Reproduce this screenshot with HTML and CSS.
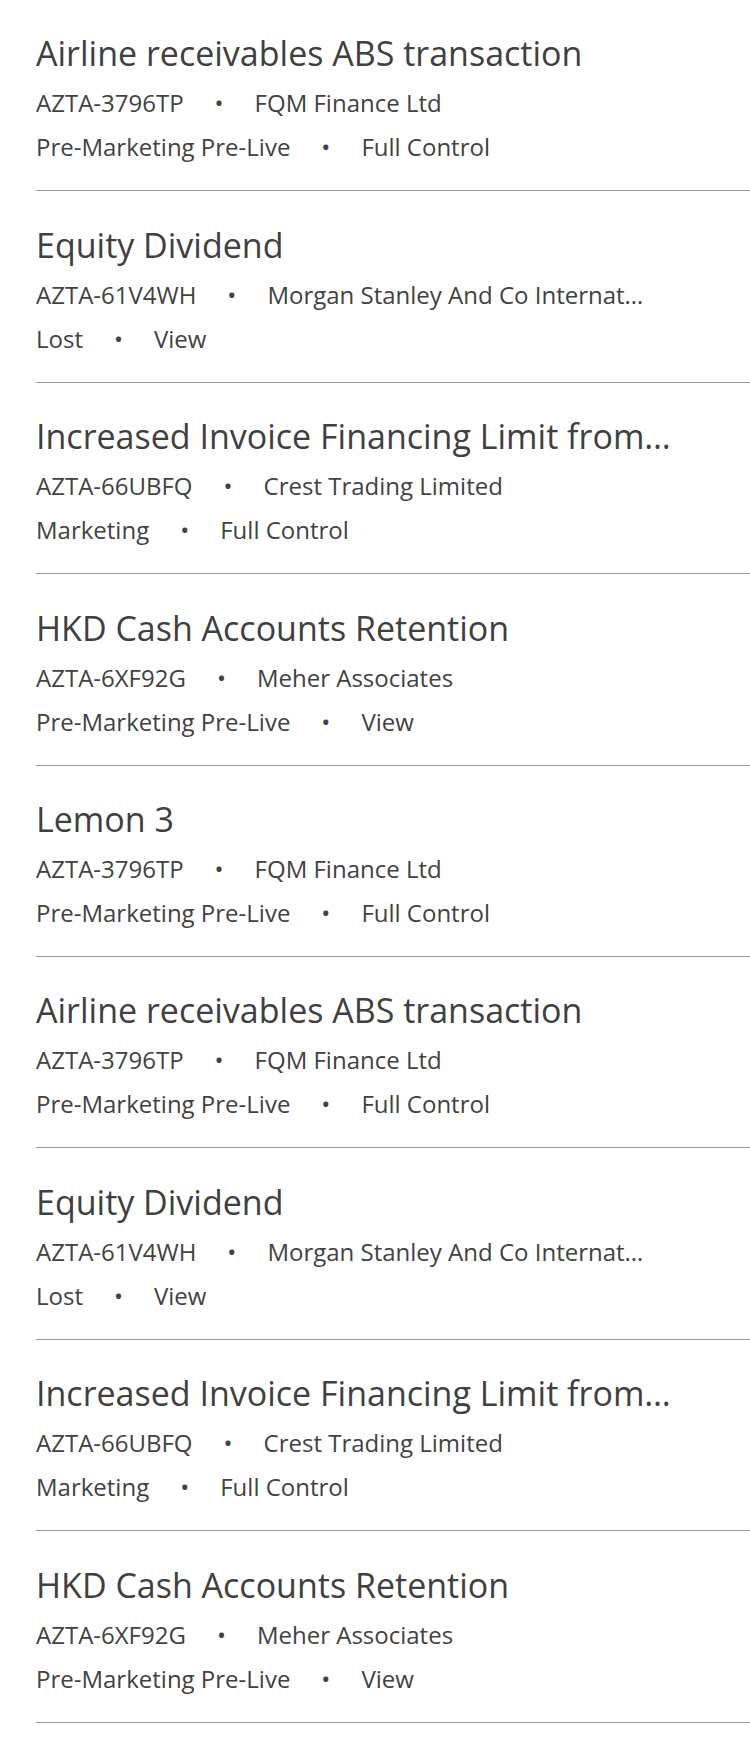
FILE: index.html
```html
<!DOCTYPE html>
<html lang="en">
<head>
<meta charset="utf-8">
<title>Deals</title>
<link rel="stylesheet" href="styles.css">
</head>
<body>
<ul class="deal-list">
  <li class="deal">
    <div class="deal-title">Airline receivables ABS transaction</div>
    <div class="deal-meta"><span>AZTA-3796TP</span><span class="dot">•</span><span>FQM Finance Ltd</span></div>
    <div class="deal-meta"><span>Pre-Marketing Pre-Live</span><span class="dot">•</span><span>Full Control</span></div>
  </li>
  <li class="deal">
    <div class="deal-title">Equity Dividend</div>
    <div class="deal-meta"><span>AZTA-61V4WH</span><span class="dot">•</span><span>Morgan Stanley And Co Internat…</span></div>
    <div class="deal-meta"><span>Lost</span><span class="dot">•</span><span>View</span></div>
  </li>
  <li class="deal">
    <div class="deal-title">Increased Invoice Financing Limit from…</div>
    <div class="deal-meta"><span>AZTA-66UBFQ</span><span class="dot">•</span><span>Crest Trading Limited</span></div>
    <div class="deal-meta"><span>Marketing</span><span class="dot">•</span><span>Full Control</span></div>
  </li>
  <li class="deal">
    <div class="deal-title">HKD Cash Accounts Retention</div>
    <div class="deal-meta"><span>AZTA-6XF92G</span><span class="dot">•</span><span>Meher Associates</span></div>
    <div class="deal-meta"><span>Pre-Marketing Pre-Live</span><span class="dot">•</span><span>View</span></div>
  </li>
  <li class="deal">
    <div class="deal-title">Lemon 3</div>
    <div class="deal-meta"><span>AZTA-3796TP</span><span class="dot">•</span><span>FQM Finance Ltd</span></div>
    <div class="deal-meta"><span>Pre-Marketing Pre-Live</span><span class="dot">•</span><span>Full Control</span></div>
  </li>
  <li class="deal">
    <div class="deal-title">Airline receivables ABS transaction</div>
    <div class="deal-meta"><span>AZTA-3796TP</span><span class="dot">•</span><span>FQM Finance Ltd</span></div>
    <div class="deal-meta"><span>Pre-Marketing Pre-Live</span><span class="dot">•</span><span>Full Control</span></div>
  </li>
  <li class="deal">
    <div class="deal-title">Equity Dividend</div>
    <div class="deal-meta"><span>AZTA-61V4WH</span><span class="dot">•</span><span>Morgan Stanley And Co Internat…</span></div>
    <div class="deal-meta"><span>Lost</span><span class="dot">•</span><span>View</span></div>
  </li>
  <li class="deal">
    <div class="deal-title">Increased Invoice Financing Limit from…</div>
    <div class="deal-meta"><span>AZTA-66UBFQ</span><span class="dot">•</span><span>Crest Trading Limited</span></div>
    <div class="deal-meta"><span>Marketing</span><span class="dot">•</span><span>Full Control</span></div>
  </li>
  <li class="deal">
    <div class="deal-title">HKD Cash Accounts Retention</div>
    <div class="deal-meta"><span>AZTA-6XF92G</span><span class="dot">•</span><span>Meher Associates</span></div>
    <div class="deal-meta"><span>Pre-Marketing Pre-Live</span><span class="dot">•</span><span>View</span></div>
  </li>
</ul>
</body>
</html>
```

FILE: styles.css
```css
html, body {
  margin: 0;
  padding: 0;
  background: #ffffff;
}

body {
  font-family: "Open Sans", "Noto Sans", sans-serif;
  color: #424242;
}

.deal-list {
  list-style: none;
  margin: 0;
  padding: 0 0 0 36px;
}

.deal {
  padding: 25.4px 0 21px 0;
  border-bottom: 1px solid #9a9a9a;
}

.deal-title {
  font-size: 34px;
  line-height: 56px;
  white-space: nowrap;
  color: #404040;
}

.deal-meta {
  display: flex;
  align-items: baseline;
  font-size: 24px;
  line-height: 44px;
  white-space: nowrap;
}

.dot {
  margin: 0 31px;
}
```
